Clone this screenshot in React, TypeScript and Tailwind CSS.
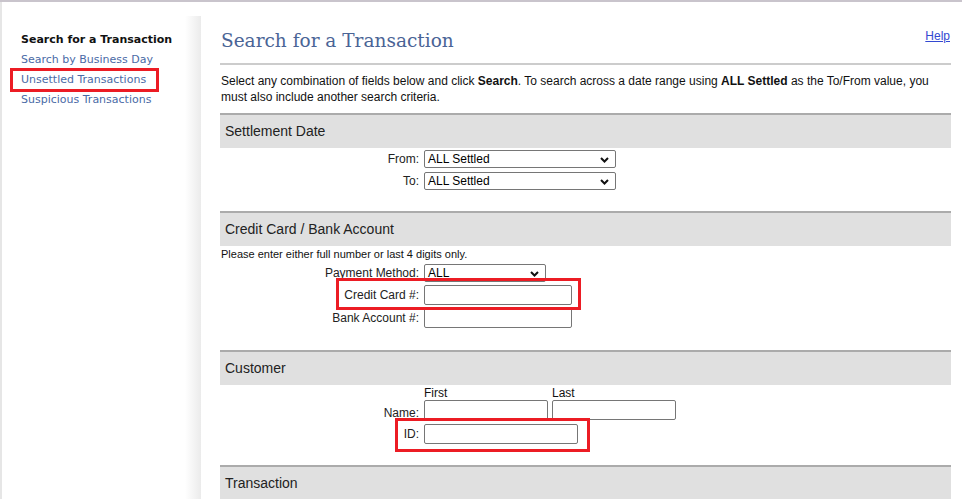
import React from "react";

const arial = { fontFamily: '"Liberation Sans", Arial, sans-serif' };

function Chevron() {
  return (
    <svg width="9" height="6" viewBox="0 0 9 6" className="absolute right-[6px] top-[6px]">
      <path d="M1 1 L4.5 4.5 L8 1" fill="none" stroke="#111" strokeWidth="2" />
    </svg>
  );
}

function Select({ value, width }: { value: string; width: string }) {
  return (
    <div
      className={`relative flex h-[18px] ${width} items-center rounded-[2px] border border-[#767676] bg-white pl-[3px] text-[12px] leading-none text-black`}
    >
      {value}
      <Chevron />
    </div>
  );
}

function Input({ width }: { width: string }) {
  return <div className={`h-[20px] ${width} rounded-[2px] border border-[#767676] bg-white`} />;
}

function SectionHeader({ title }: { title: string }) {
  return (
    <div className="flex h-[35px] items-center border-t-2 border-[#ababab] bg-[#e0e0e0] pl-[5px] text-[14px] text-[#222]">
      {title}
    </div>
  );
}

function Row({ label, children, className = "" }: { label: string; children: React.ReactNode; className?: string }) {
  return (
    <div className={`flex items-center ${className}`}>
      <div className="w-[200px] pr-[1px] text-right text-[12px] leading-[14px] text-[#222]">{label}</div>
      <div className="ml-[4px] flex">{children}</div>
    </div>
  );
}

export default function App() {
  return (
    <div className="flex h-[499px] w-[962px] overflow-hidden border-t-2 border-[#c9c4cc] bg-white">
      {/* Sidebar */}
      <div className="flex w-[201px] shrink-0 border-l-2 border-[#e6e6e6]">
        <div className="w-[183px] pt-[28px] text-[11px] leading-[20px]" style={{ fontFamily: '"DejaVu Sans", Verdana, sans-serif' }}>
          <div className="pl-[19px] font-bold text-[#111]">Search for a Transaction</div>
          <div className="pl-[19px] text-[#4a6aa6]">Search by Business Day</div>
          <div className="relative pl-[19px] text-[#4a6aa6]">
            Unsettled Transactions
            <div className="absolute left-[8px] top-[-2px] h-[24px] w-[149px] border-[3px] border-[#ec1c24]" />
          </div>
          <div className="pl-[19px] text-[#4a6aa6]">Suspicious Transactions</div>
        </div>
        <div className="mt-[14px] w-[16px] bg-gradient-to-r from-white to-[#ebebeb]" />
      </div>

      {/* Main */}
      <div className="w-[761px] shrink-0 pl-[19px] pr-[11px]" style={arial}>
        <div className="flex h-[63px] items-start justify-between border-b-2 border-[#cccccc] pt-[26px]">
          <h1
            className="pl-[1px] leading-[26px] text-[#4a6496]"
            style={{ fontFamily: '"DejaVu Serif", Georgia, serif', fontSize: "18.5px" }}
          >
            Search for a Transaction
          </h1>
          <a className="mt-[0px] pr-[1px] text-[12px] leading-[16px] text-[#3349d1] underline" href="#">
            Help
          </a>
        </div>
        <p className="mt-[8px] pl-[1px] text-[12px] leading-[16px] text-[#111]">
          Select any combination of fields below and click <b>Search</b>. To search across a date range using{" "}
          <b>ALL Settled</b> as the To/From value, you must also include another search criteria.
        </p>

        <div className="mt-[8px]">
          <SectionHeader title="Settlement Date" />
          <div className="flex flex-col gap-[4px] pt-[2px]">
            <Row label="From:">
              <Select value="ALL Settled" width="w-[192px]" />
            </Row>
            <Row label="To:">
              <Select value="ALL Settled" width="w-[192px]" />
            </Row>
          </div>
        </div>

        <div className="mt-[21px]">
          <SectionHeader title="Credit Card / Bank Account" />
          <div className="pl-[1px] pt-[1px] text-[11px] leading-[14px] text-[#111]">
            Please enter either full number or last 4 digits only.
          </div>
          <div className="mt-[3px] flex flex-col gap-[3px]">
            <Row label="Payment Method:">
              <Select value="ALL" width="w-[122px]" />
            </Row>
            <Row label="Credit Card #:">
              <div className="relative">
                <Input width="w-[148px]" />
                <div className="absolute left-[-88px] top-[-7px] h-[32px] w-[245px] border-[3px] border-[#ec1c24]" />
              </div>
            </Row>
            <Row label="Bank Account #:">
              <Input width="w-[148px]" />
            </Row>
          </div>
        </div>

        <div className="mt-[22px]">
          <SectionHeader title="Customer" />
          <div className="mt-[1px] flex">
            <div className="w-[204px]" />
            <div className="w-[128px] text-[12px] leading-[14px] text-[#111]">First</div>
            <div className="text-[12px] leading-[14px] text-[#111]">Last</div>
          </div>
          <div className="flex items-end">
            <div className="w-[200px] pr-[1px] text-right text-[12px] leading-[14px] text-[#222]">Name:</div>
            <div className="ml-[4px] flex gap-[4px]">
              <Input width="w-[124px]" />
              <Input width="w-[124px]" />
            </div>
          </div>
          <Row label="ID:" className="mt-[4px]">
            <div className="relative">
              <Input width="w-[154px]" />
              <div className="absolute left-[-29px] top-[-6px] h-[34px] w-[195px] border-[3px] border-[#ec1c24]" />
            </div>
          </Row>
        </div>

        <div className="mt-[21px]">
          <SectionHeader title="Transaction" />
        </div>
      </div>
    </div>
  );
}
